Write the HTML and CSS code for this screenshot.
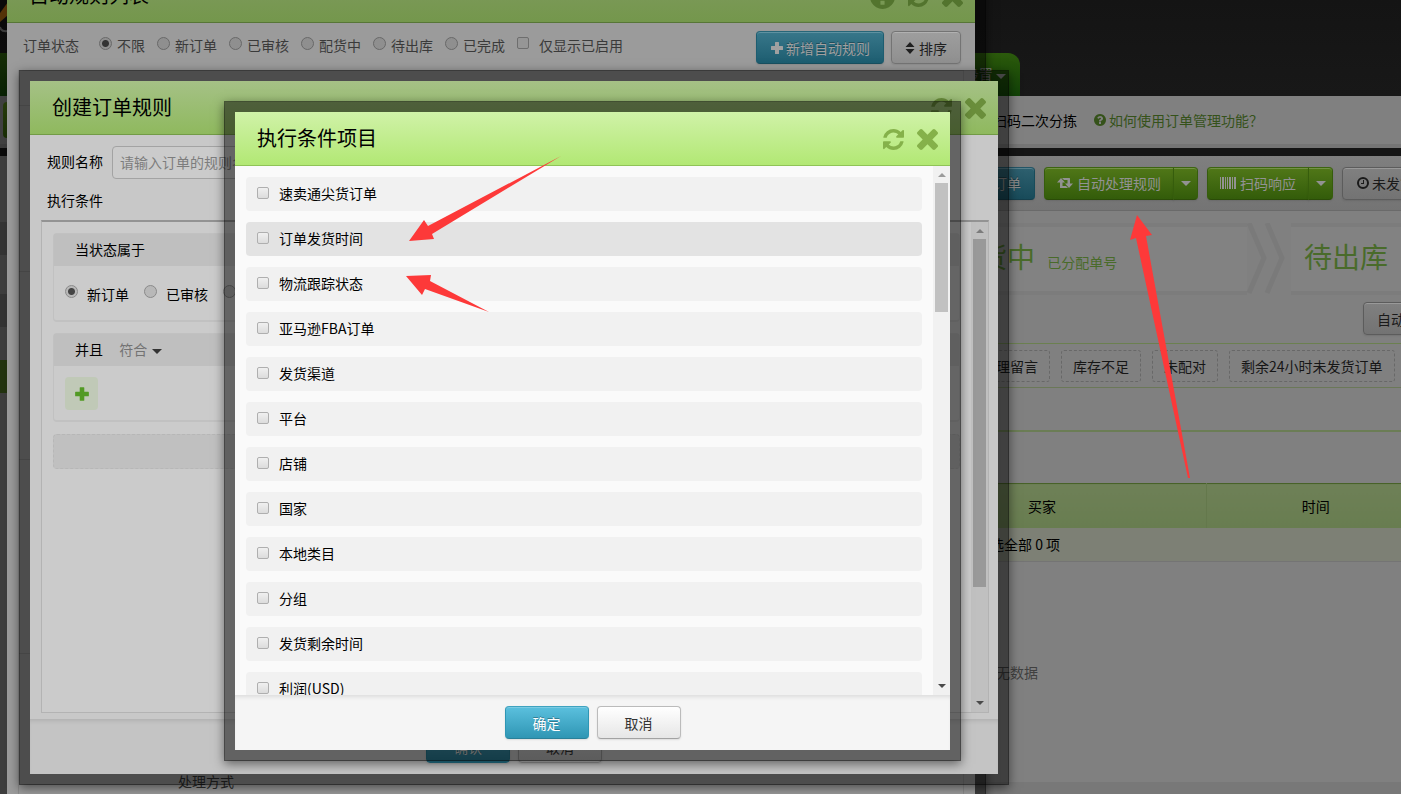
FILE: index.html
```
<!DOCTYPE html>
<html lang="zh-CN">
<head>
    <meta charset="UTF-8">
    <meta name="viewport" content="width=device-width, initial-scale=1.0">
    <title>订单管理</title>
    <link rel="stylesheet" href="styles.css">
</head>
<body>
    <!-- shared icons -->
    <svg class="sprite" aria-hidden="true">
        <symbol id="i-refresh" viewBox="0 0 1536 1536"><path d="M1511 928q0 5-1 7-64 268-268 434.500t-478 166.500q-146 0-282.500-55t-243.500-157l-129 129q-19 19-45 19t-45-19-19-45v-448q0-26 19-45t45-19h448q26 0 45 19t19 45-19 45l-137 137q71 66 161 102t187 36q134 0 250-65t186-179q11-17 53-117 8-23 30-23h192q13 0 22.500 9.500t9.500 22.500zm25-800v448q0 26-19 45t-45 19h-448q-26 0-45-19t-19-45 19-45l138-138q-148-137-349-137-134 0-250 65t-186 179q-11 17-53 117-8 23-30 23h-199q-13 0-22.500-9.500t-9.500-22.500v-7q65-268 270-434.500t480-166.500q146 0 284 55.500t245 156.500l130-129q19-19 45-19t45 19 19 45z"/></symbol>
        <symbol id="i-close" viewBox="302 366 1188 1188"><path d="M1490 1322q0 40-28 68l-136 136q-28 28-68 28t-68-28l-294-294-294 294q-28 28-68 28t-68-28l-136-136q-28-28-28-68t28-68l294-294-294-294q-28-28-28-68t28-68l136-136q28-28 68-28t68 28l294 294 294-294q28-28 68-28t68 28l136 136q28 28 28 68t-28 68l-294 294 294 294q28 28 28 68z"/></symbol>
        <symbol id="i-help" viewBox="128 128 1536 1536"><path d="M1024 1376v-192q0-14-9-23t-23-9h-192q-14 0-23 9t-9 23v192q0 14 9 23t23 9h192q14 0 23-9t9-23zm256-672q0-88-55.500-163t-138.500-116-170-41q-243 0-371 213-15 24 8 42l132 100q7 6 19 6 16 0 25-12 53-68 86-92 34-24 86-24 48 0 85.500 26t37.500 59q0 38-20 61t-68 45q-63 28-115.500 86.500t-52.500 125.500v36q0 14 9 23t23 9h192q14 0 23-9t9-23q0-19 21.500-49.500t54.500-49.500q32-18 49-28.500t46-35 44.500-48 28-60.500 12.500-81zm384 192q0 209-103 385.500t-279.500 279.500-385.500 103-385.500-103-279.500-279.500-103-385.500 103-385.500 279.500-279.500 385.500-103 385.500 103 279.500 279.500 103 385.500z"/></symbol>
        <symbol id="i-plus" viewBox="0 0 14 14"><path d="M5 1.500Q5 1 5.500 1h3q.5 0 .5.500V5h3.500q.5 0 .5.500v3q0 .5-.5.500H9v3.500q0 .5-.5.500h-3q-.5 0-.5-.5V9H1.500Q1 9 1 8.500v-3Q1 5 1.500 5H5z"/></symbol>
        <symbol id="i-sort" viewBox="0 0 10 12"><path d="M5 0l4.500 5h-9zM5 12L.5 7h9z"/></symbol>
        <symbol id="i-retweet" viewBox="0 0 16 12"><path d="M4 1l4 4.500H5.500V9H9l2 2H3.500Q3 11 3 10.500v-5H0zM12 11L8 6.500h2.500V3H7L5 1h7.500q.5 0 .5.500v5h3z"/></symbol>
        <symbol id="i-barcode" viewBox="0 0 16 12"><path d="M0 0h1v12H0zM2 0h2v12H2zM5 0h1v12H5zM7 0h1v12H7zM9 0h2v12H9zM12 0h1v12h-1zM14 0h2v12h-2z"/></symbol>
        <symbol id="i-clock" viewBox="0 0 14 14"><circle cx="7" cy="7" r="5" fill="none" stroke="currentColor" stroke-width="2"/><path d="M7 4h1v4H5V7h2z"/></symbol>
    </svg>

    <div class="page">
        <header class="top">
            <svg class="logo" width="8" height="34" viewBox="0 0 8 34" aria-hidden="true"><path d="M8 2L0 13v9l8-7z" fill="#a86410"/><path d="M0 27q1 5 8 4" fill="none" stroke="#777" stroke-width="2"/></svg>
            <nav class="nav"><a href="#">设置 <i class="caret"></i></a></nav>
        </header>
        <div class="subnav">
            <span class="subnav-current"></span>
            <a href="#">扫码二次分拣</a>
            <a href="#" class="help"><svg><use href="#i-help"/></svg>如何使用订单管理功能？</a>
        </div>
        <div class="columns">
            <aside class="sidebar">
                <div class="side-head"></div>
                <div class="side-item dark"></div>
                <div class="side-item tall"></div>
                <div class="side-item dark"></div>
                <div class="side-item"></div>
                <div class="side-item active"></div>
            </aside>
            <main class="main">
                <div class="toolbar">
                    <button class="btn blue dim-blue">手工订单</button>
                    <div class="btn-group">
                        <button class="btn green"><svg class="ic-wide"><use href="#i-retweet"/></svg>自动处理规则</button>
                        <button class="btn green split" aria-label="更多规则"><i class="caret"></i></button>
                    </div>
                    <div class="btn-group">
                        <button class="btn green"><svg class="ic-wide"><use href="#i-barcode"/></svg>扫码响应</button>
                        <button class="btn green split" aria-label="更多扫码"><i class="caret"></i></button>
                    </div>
                    <button class="btn dim-plain"><svg><use href="#i-clock"/></svg>未发货订单</button>
                </div>
                <div class="steps">
                    <a href="#" class="step">配货中 <small>已分配单号</small></a>
                    <svg class="chevron" width="44" height="72" viewBox="0 0 44 72" aria-hidden="true"><path d="M2 0l15 35L2 70M20 0l15 35L20 70" fill="none" stroke="#7a7a7a" stroke-width="5"/></svg>
                    <a href="#" class="step last">待出库 <small class="warn">已出库</small></a>
                </div>
                <div class="auto-row"><button class="btn dim-plain">自动刷新</button></div>
                <div class="tags">
                    <a href="#">有处理留言</a>
                    <a href="#">库存不足</a>
                    <a href="#">未配对</a>
                    <a href="#">剩余24小时未发货订单</a>
                </div>
                <div class="gap-row"></div>
                <div class="gap-row plain"></div>
                <table class="orders">
                    <colgroup><col class="c-goods"><col class="c-buyer"><col></colgroup>
                    <thead><tr><th></th><th>买家</th><th>时间</th></tr></thead>
                    <tbody><tr><td colspan="3">勾选全部 0 项</td></tr></tbody>
                </table>
                <div class="empty">暂无数据</div>
            </main>
        </div>
    </div>

    <!-- rule list -->
    <section class="modal modal-list">
        <header class="modal-head">
            <h2>自动规则列表</h2>
            <button class="icon-btn" aria-label="帮助"><svg class="big"><use href="#i-help"/></svg></button>
            <button class="icon-btn" aria-label="刷新"><svg><use href="#i-refresh"/></svg></button>
            <button class="icon-btn" aria-label="关闭"><svg><use href="#i-close"/></svg></button>
        </header>
        <div class="filter">
            <span class="filter-title">订单状态</span>
            <label><input type="radio" name="status" checked>不限</label>
            <label><input type="radio" name="status">新订单</label>
            <label><input type="radio" name="status">已审核</label>
            <label><input type="radio" name="status">配货中</label>
            <label><input type="radio" name="status">待出库</label>
            <label><input type="radio" name="status">已完成</label>
            <label class="check"><input type="checkbox">仅显示已启用</label>
            <div class="filter-actions">
                <button class="btn blue mid-blue"><svg><use href="#i-plus"/></svg>新增自动规则</button>
                <button class="btn mid-plain"><svg class="ic-sort"><use href="#i-sort"/></svg>排序</button>
            </div>
        </div>
        <div class="rule-list">
            <div class="rule-head"></div>
            <div class="rule"></div>
            <div class="rule"></div>
            <div class="rule"></div>
            <div class="rule"><span>处理方式</span></div>
        </div>
    </section>

    <!-- create rule -->
    <section class="modal modal-create">
        <header class="modal-head">
            <h2>创建订单规则</h2>
            <button class="icon-btn" aria-label="刷新"><svg><use href="#i-refresh"/></svg></button>
            <button class="icon-btn" aria-label="关闭"><svg><use href="#i-close"/></svg></button>
        </header>
        <div class="create-body">
            <div class="field">
                <label for="ruleName">规则名称</label>
                <input type="text" id="ruleName" placeholder="请输入订单的规则名称">
            </div>
            <div class="field-title">执行条件</div>
            <div class="panel">
                <div class="panel-body">
                    <div class="card">
                        <div class="card-head">当状态属于</div>
                        <div class="card-body states">
                            <label><input type="radio" name="state" checked>新订单</label>
                            <label><input type="radio" name="state">已审核</label>
                            <label><input type="radio" name="state">配货中</label>
                        </div>
                    </div>
                    <div class="card">
                        <div class="card-head">并且 <button class="match">符合 <i class="caret"></i></button></div>
                        <div class="card-body"><button class="add" aria-label="添加条件"><svg><use href="#i-plus"/></svg></button></div>
                    </div>
                    <div class="card-empty"></div>
                </div>
                <div class="scroll" aria-hidden="true"><i class="up"></i><b class="thumb thumb-long"></b><i class="down"></i></div>
            </div>
        </div>
        <footer class="modal-foot">
            <button class="btn blue soft-blue">确认</button>
            <button class="btn soft-plain">取消</button>
        </footer>
    </section>

    <!-- condition picker -->
    <section class="modal modal-pick">
        <header class="modal-head">
            <h2>执行条件项目</h2>
            <button class="icon-btn" aria-label="刷新"><svg><use href="#i-refresh"/></svg></button>
            <button class="icon-btn" aria-label="关闭"><svg><use href="#i-close"/></svg></button>
        </header>
        <div class="pick-body">
            <div class="options">
                <label><input type="checkbox">速卖通尖货订单</label>
                <label class="hover"><input type="checkbox">订单发货时间</label>
                <label><input type="checkbox">物流跟踪状态</label>
                <label><input type="checkbox">亚马逊FBA订单</label>
                <label><input type="checkbox">发货渠道</label>
                <label><input type="checkbox">平台</label>
                <label><input type="checkbox">店铺</label>
                <label><input type="checkbox">国家</label>
                <label><input type="checkbox">本地类目</label>
                <label><input type="checkbox">分组</label>
                <label><input type="checkbox">发货剩余时间</label>
                <label><input type="checkbox">利润(USD)</label>
            </div>
            <div class="scroll" aria-hidden="true"><i class="up"></i><b class="thumb"></b><i class="down"></i></div>
        </div>
        <footer class="modal-foot">
            <button class="btn blue">确定</button>
            <button class="btn">取消</button>
        </footer>
    </section>

    <!-- red pointers -->
    <svg class="pointers" aria-hidden="true">
        <path d="M409 241L424 220L428 226L561 156L432 234L434 239z"/>
        <path d="M406 276L431 275L430 281L489 312L425 289L422 295z"/>
        <path d="M1137 215L1152 235L1146 236L1190 478L1188 478L1136 238L1130 240z"/>
    </svg>
</body>
</html>
```
FILE: styles.css
```
* {
    box-sizing: border-box;
}
body {
    margin: 0;
    height: 100vh;
    overflow: hidden;
    position: relative;
    background: #777;
    color: #000;
    font: 14px/20px "Noto Sans CJK SC", sans-serif;
}
a {
    color: inherit;
    text-decoration: none;
}
button, input {
    font: inherit;
    color: inherit;
}
svg {
    fill: currentColor;
    flex: none;
}
.sprite {
    display: none;
}
.caret {
    display: inline-block;
    border: 5px solid transparent;
    border-top: 5px solid;
    border-bottom: 0;
    vertical-align: middle;
}

/* buttons */
.btn {
    display: inline-flex;
    align-items: center;
    justify-content: center;
    gap: 2px;
    height: 33px;
    padding: 0 27px;
    border: 1px solid #bbb;
    border-bottom-color: #a2a2a2;
    border-radius: 4px;
    background: linear-gradient(#fff, #e6e6e6);
    box-shadow: inset 0 1px 0 rgba(255, 255, 255, .2), 0 1px 2px rgba(0, 0, 0, .1);
    color: #333;
    white-space: nowrap;
    flex: none;
    cursor: pointer;
}
.btn svg {
    width: 14px;
    height: 14px;
}
.btn svg.ic-wide {
    width: 16px;
    height: 12px;
    margin-right: 2px;
}
.btn svg.ic-sort {
    width: 10px;
    height: 12px;
    margin-right: 2px;
}
.blue {
    background: linear-gradient(#5bc0de, #2f96b4);
    border-color: #3fa3c0 #2f96b4 #2a8099;
    color: #fff;
    text-shadow: 0 -1px 0 rgba(0, 0, 0, .3);
}
.green {
    padding: 0 12px;
    background: linear-gradient(#507718, #335c0a);
    border-color: #3d6510 #365d0c #2b4c08;
    color: #929292;
}
.dim-blue {
    background: linear-gradient(#2e606f, #184b5a);
    border-color: #245667 #184b5a #153f4c;
    color: #8a8a8a;
    padding: 0 13px;
}
.dim-plain {
    background: linear-gradient(#808080, #737373);
    border-color: #5c5c5c;
    color: #1a1a1a;
    padding: 0 13px;
}
.mid-blue {
    background: linear-gradient(#38778a, #1d5d70);
    border-color: #276678 #1d5d70 #195060;
    color: #a0a0a0;
    padding: 0 13px;
}
.mid-plain {
    background: linear-gradient(#9e9e9e, #8f8f8f);
    border-color: #747474;
    color: #202020;
    padding: 0 13px;
}
.soft-blue {
    background: linear-gradient(#499ab2, #267890);
    border-color: #26788f;
    color: #ccc;
}
.soft-plain {
    background: linear-gradient(#ccc, #b8b8b8);
    border-color: #969696;
}

/* radios and tick boxes */
input[type="radio"], input[type="checkbox"] {
    appearance: none;
    margin: 0;
    flex: none;
    width: 12px;
    height: 12px;
    border: 1px solid #afafaf;
    border-radius: 2px;
    background: linear-gradient(#f0f0f0, #dcdcdc);
}
input[type="radio"] {
    width: 13px;
    height: 13px;
    border-radius: 50%;
    border-color: #696969;
    background: #8f8f8f;
}
input[type="radio"]:checked {
    background: radial-gradient(circle, #333 3px, #8f8f8f 4px);
}

/* page underneath */
.page {
    height: 100%;
    display: flex;
    flex-direction: column;
    overflow: hidden;
}
.top {
    height: 96px;
    flex: none;
    background: linear-gradient(#141414, #181818);
    display: flex;
    flex-direction: column;
    justify-content: space-between;
    align-items: flex-start;
}
.nav {
    width: 1020px;
    height: 43px;
    padding: 11px 14px 0 0;
    border-radius: 0 12px 0 0;
    background: linear-gradient(#2c5a0c, #114207);
    color: #8a8a8a;
    text-align: right;
}
.subnav {
    height: 60px;
    flex: none;
    display: flex;
    align-items: center;
    gap: 17px;
    padding-bottom: 4px;
    background: #808080;
    border-bottom: 8px solid #151515;
    box-shadow: inset 0 -4px 0 #757575;
}
.subnav-current {
    width: 973px;
    height: 36px;
    margin-left: 3px;
    border-radius: 4px;
    background: linear-gradient(#507718, #335c0a);
}
.help {
    display: flex;
    align-items: center;
    gap: 3px;
    color: #35521a;
}
.help svg {
    width: 12px;
    height: 12px;
}
.columns {
    flex: 1;
    display: flex;
    min-height: 0;
}
.sidebar {
    width: 200px;
    flex: none;
    background: #7a7a7a;
}
.side-head {
    height: 66px;
}
.side-item {
    height: 33px;
}
.side-item.tall {
    height: 39px;
}
.side-item.dark {
    background: #676767;
}
.side-item.active {
    background: #45651f;
}
.main {
    flex: 1;
    min-width: 0;
    overflow: hidden;
    background: #808080;
    border-bottom: 12px solid #787878;
}
.toolbar {
    height: 55px;
    display: flex;
    align-items: center;
    gap: 9px;
    padding-left: 751px;
    background: linear-gradient(#7f7f7f, #747474);
    border-bottom: 1px solid #6a6a6a;
}
.btn-group {
    display: flex;
    flex: none;
}
.btn-group .btn:first-child {
    border-radius: 4px 0 0 4px;
}
.btn-group .split {
    width: 25px;
    padding: 0;
    margin-left: -1px;
    border-radius: 0 4px 4px 0;
}
.steps {
    height: 72px;
    margin-top: 12px;
    display: flex;
    background: #828282;
    box-shadow: inset 0 4px 0 #7c7c7c, inset 0 -4px 0 #7c7c7c;
    color: #496b2a;
    white-space: nowrap;
}
.step {
    padding: 17px 0 0 751px;
    width: 1047px;
    flex: none;
    font-size: 28px;
    line-height: 32px;
}
.step small {
    font-size: 14px;
    margin-left: 6px;
}
.step.last {
    width: auto;
    padding-left: 13px;
}
.step .warn {
    color: #a06a20;
}
.chevron {
    background: #808080;
}
.auto-row {
    height: 49px;
    padding: 7px 0 0 1163px;
    border-bottom: 1px solid #6b8050;
}
.tags {
    height: 44px;
    display: flex;
    align-items: center;
    gap: 11px;
    padding-left: 756px;
    border-bottom: 1px solid #6b7858;
    color: #161616;
}
.tags a {
    flex: none;
    padding: 5px 11px;
    border: 1px dashed #686868;
    border-radius: 3px;
    line-height: 20px;
}
.gap-row {
    height: 44px;
    border-bottom: 2px solid #6b7d55;
}
.gap-row.plain {
    height: 51px;
    border: 0;
}
.orders {
    width: calc(100% + 25px);
    table-layout: fixed;
    border-collapse: collapse;
}
.c-goods {
    width: 678px;
}
.c-buyer {
    width: 328px;
}
.orders th {
    height: 44px;
    padding: 0;
    border-top: 1px solid #486229;
    border-right: 1px solid #64784c;
    background: linear-gradient(#6e8057, #687d50);
    font-weight: normal;
}
.orders td {
    height: 34px;
    padding: 0 0 0 776px;
    border-bottom: 1px solid #747474;
    background: #7d8075;
}
.empty {
    padding: 100px 0 0 782px;
    color: #404040;
}

/* modal frames */
.modal {
    position: absolute;
    display: flex;
    flex-direction: column;
    border: 11px solid rgba(0, 0, 0, .5);
    background-clip: padding-box;
    box-shadow: 0 3px 10px rgba(0, 0, 0, .5);
}
.modal-head {
    height: 54px;
    flex: none;
    display: flex;
    align-items: center;
    gap: 13px;
    padding: 2px 12px 0 22px;
    border-bottom: 1px solid #8fc357;
    background: linear-gradient(#d0f2a8, #b2e874);
}
.modal-head h2 {
    flex: 1;
    margin: 0;
    padding-bottom: 4px;
    font-size: 20px;
    font-weight: normal;
    line-height: 28px;
}
.icon-btn {
    display: flex;
    padding: 0;
    border: 0;
    background: none;
    color: #85b14a;
}
.icon-btn svg {
    width: 21px;
    height: 21px;
}
.icon-btn svg.big {
    width: 25px;
    height: 25px;
}
.modal-foot {
    height: 55px;
    flex: none;
    display: flex;
    align-items: center;
    justify-content: center;
    gap: 8px;
    background: #f5f5f5;
    box-shadow: inset 0 4px 4px -2px rgba(0, 0, 0, .1);
}

/* rule list modal */
.modal-list {
    top: -42px;
    left: -4px;
    right: 415px;
    bottom: -20px;
    background-color: #9b9b9b;
}
.modal-list .modal-head {
    background: linear-gradient(#809a60, #74974c);
    border-color: #577637;
}
.modal-list .icon-btn {
    color: #53742e;
}
.filter {
    display: flex;
    align-items: center;
    gap: 12px;
    height: 47px;
    flex: none;
    padding: 0 14px 4px 16px;
    color: #3a3a3a;
}
.filter-title {
    margin-right: 8px;
}
.filter label {
    display: flex;
    align-items: center;
    gap: 5px;
    flex: none;
}
.filter input {
    margin-bottom: 3px;
}
.filter label.check {
    gap: 10px;
}
.filter .check input {
    border-color: #6e6e6e;
    background: #969696;
}
.filter-actions {
    display: flex;
    gap: 7px;
    margin-left: auto;
    padding-top: 6px;
}
.rule-list {
    flex: 1;
    min-height: 0;
    overflow: hidden;
    margin: 0 11px;
    border: 1px solid #8c8c8c;
}
.rule-head {
    height: 35px;
    border-bottom: 1px solid #8a8a8a;
}
.rule {
    height: 166px;
    border-bottom: 1px solid #8a8a8a;
}
.rule:nth-child(3) {
    height: 188px;
}
.rule:nth-child(4) {
    height: 194px;
}
.rule:last-child {
    padding: 117px 0 0 159px;
    color: #303030;
}

/* create rule modal */
.modal-create {
    top: 70px;
    left: 19px;
    right: 392px;
    bottom: 9px;
    background-color: #c8c8c8;
}
.modal-create .modal-head {
    background: linear-gradient(#a5c186, #8fb95e);
    border-color: #729b46;
}
.modal-create .icon-btn {
    color: #6a8e3b;
}
.modal-create .modal-foot {
    background: #c4c4c4;
}
.create-body {
    flex: 1;
    min-height: 0;
    display: flex;
    flex-direction: column;
    padding: 11px 9px 6px 11px;
}
.field {
    display: flex;
    align-items: center;
    gap: 9px;
    padding-left: 6px;
}
.field label {
    padding-bottom: 3px;
}
.field input {
    width: 300px;
    height: 33px;
    padding: 0 7px 2px;
    border: 1px solid #a3a3a3;
    border-radius: 4px;
    background: #cbcbcb;
}
.field input::placeholder {
    color: #7d7d7d;
}
.field-title {
    padding: 11px 6px 10px;
}
.panel {
    flex: 1;
    min-height: 0;
    display: flex;
    border: 1px solid #b3b3b3;
    border-top: 2px solid #939393;
    background: #cbcbcb;
}
.panel-body {
    flex: 1;
    padding: 11px;
    display: flex;
    flex-direction: column;
    gap: 11px;
}
.card {
    border: 1px solid #c1c1c1;
    border-bottom-width: 2px;
    border-radius: 4px;
}
.card-head {
    height: 32px;
    padding: 5px 21px;
    background: #bfbfbf;
}
.card-body {
    height: 54px;
    padding: 11px;
}
.states {
    display: flex;
    gap: 15px;
    padding-top: 18px;
}
.states label {
    display: flex;
    gap: 9px;
}
.modal-create input[type="radio"] {
    margin-top: 1px;
    border-color: #8a8a8a;
    background: #b8b8b8;
}
.modal-create input[type="radio"]:checked {
    background: radial-gradient(circle, #444 3px, #b8b8b8 4px);
}
.match {
    margin-left: 13px;
    padding: 0;
    border: 0;
    background: none;
    color: #737373;
}
.match .caret {
    margin-left: 2px;
    color: #333;
}
.add {
    width: 33px;
    height: 33px;
    padding: 0;
    display: flex;
    align-items: center;
    justify-content: center;
    border: 0;
    border-radius: 4px;
    background: #c0c9b7;
    color: #529a24;
}
.add svg {
    width: 16px;
    height: 16px;
}
.card-empty {
    height: 35px;
    margin-top: 1px;
    border: 1px dashed #b7b7b7;
    border-radius: 4px;
    background: #c0c0c0;
}

/* scrollbars */
.scroll {
    width: 17px;
    flex: none;
    display: flex;
    flex-direction: column;
    align-items: center;
    padding: 7px 0;
    background: #f1f1f1;
}
.scroll i {
    border: 4px solid transparent;
}
.scroll .up {
    border-top: 0;
    border-bottom-color: #9b9b9b;
}
.scroll .down {
    border-bottom: 0;
    border-top-color: #4a4a4a;
    margin-top: auto;
}
.thumb {
    width: 13px;
    height: 129px;
    margin-top: 6px;
    background: #c1c1c1;
}
.modal-create .scroll {
    background: #c0c0c0;
}
.modal-create .up {
    border-bottom-color: #7c7c7c;
}
.thumb-long {
    height: 348px;
    background: #999;
}

/* condition picker modal */
.modal-pick {
    top: 101px;
    left: 224px;
    right: 440px;
    bottom: 33px;
    background-color: #fafafa;
}
.pick-body {
    flex: 1;
    min-height: 0;
    display: flex;
}
.options {
    flex: 1;
    overflow: hidden;
    padding: 11px;
}
.options label {
    height: 34px;
    margin-bottom: 11px;
    padding: 0 11px 2px;
    display: flex;
    align-items: center;
    gap: 10px;
    border-radius: 4px;
    background: #f1f1f1;
}
.options label.hover, .options label:hover {
    background: #e3e3e3;
}

.pointers {
    position: absolute;
    top: 0;
    left: 0;
    width: 100%;
    height: 100%;
    fill: #fd3939;
    pointer-events: none;
}
```
